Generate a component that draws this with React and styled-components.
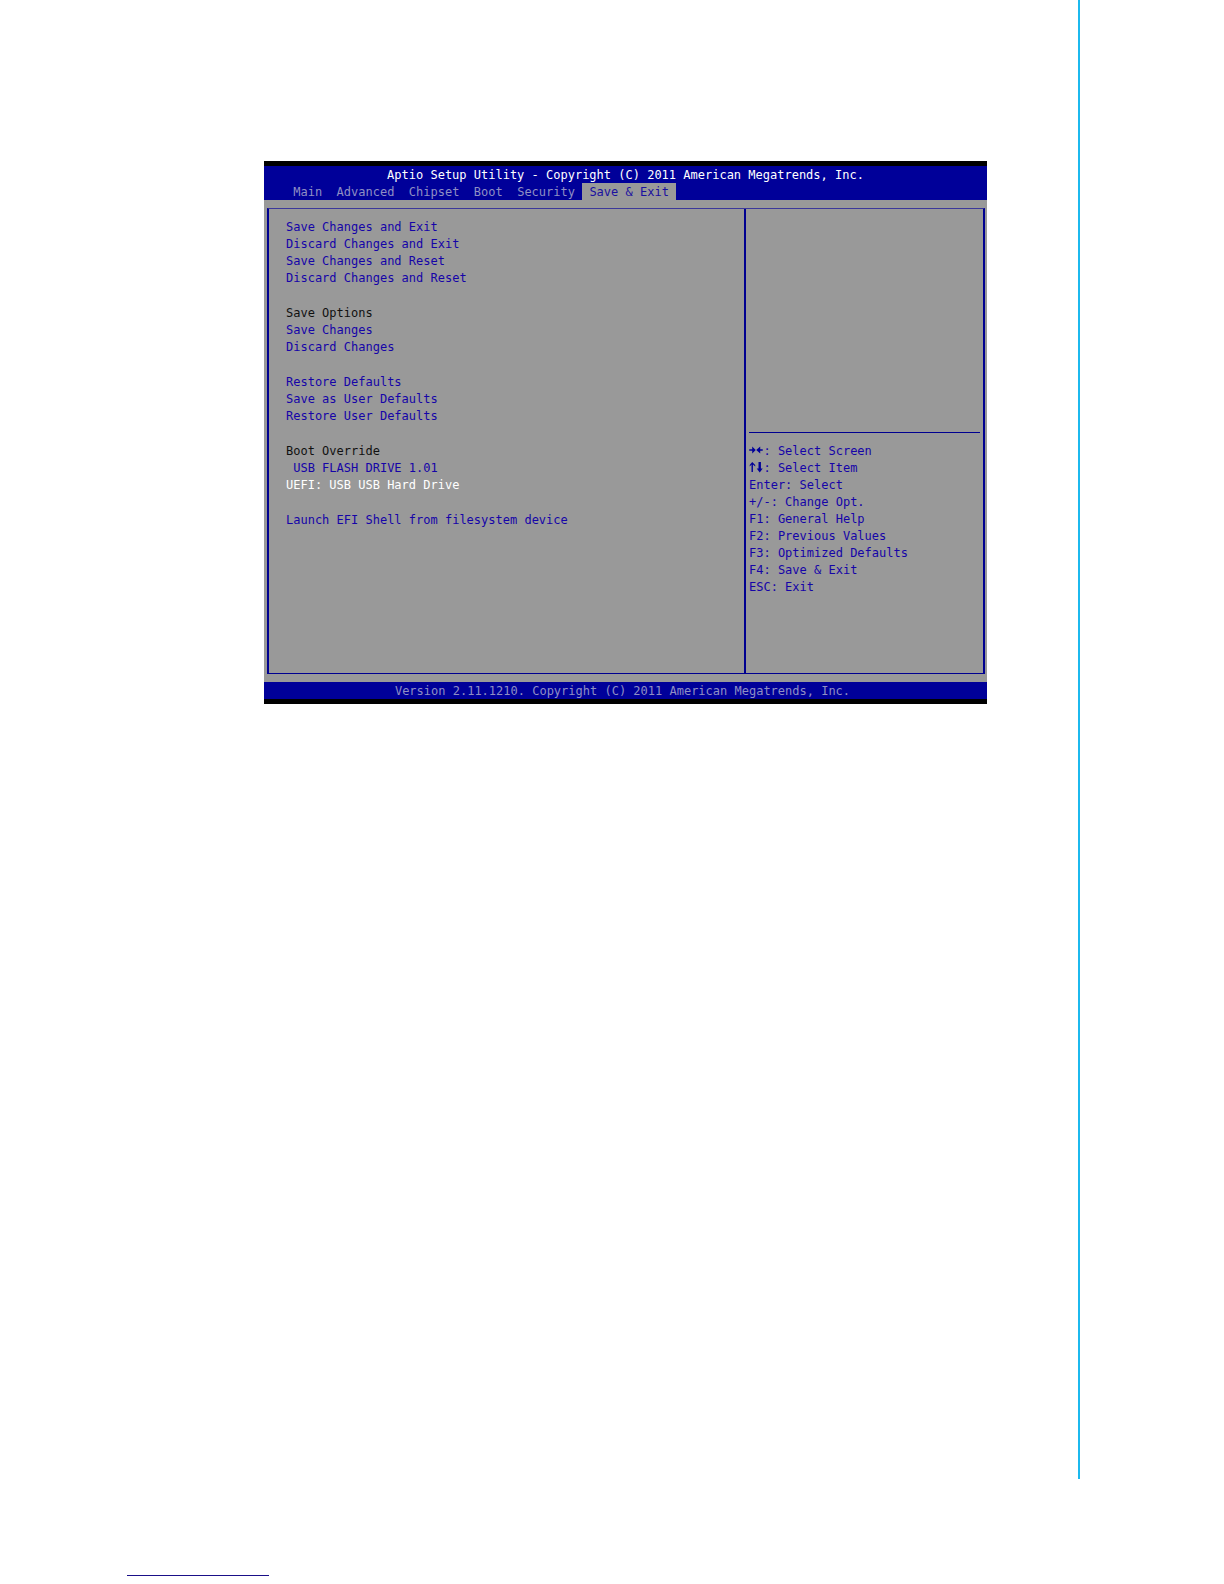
import React, { useState } from "react";
import styled, { createGlobalStyle, css } from "styled-components";

const mono = '"DejaVu Sans Mono", "Liberation Mono", monospace';

const GlobalStyle = createGlobalStyle`
  *, *::before, *::after { box-sizing: border-box; }
  body { margin: 0; background: #fff; }
`;

const Page = styled.div`
  min-height: 100vh;
  display: flex;
  flex-direction: column;
`;

const Sheet = styled.main`
  flex: 1;
  margin-right: 144px;
  padding: 161px 91px 0 264px;
  border-right: 2px solid #1cb9ee;
`;

const PageFoot = styled.footer`
  height: 105px;
  padding: 96px 0 0 127px;
`;

const FootRule = styled.hr`
  width: 142px;
  margin: 0;
  border: 0;
  border-top: 1px solid #1a0f88;
`;

const Screen = styled.section`
  display: flex;
  flex-direction: column;
  border: solid #000;
  border-width: 5px 0;
  background: #999;
  color: #1504a8;
  font-family: ${mono};
  font-size: 12px;
  line-height: 17px;
`;

const barText = css`
  font: inherit;
  line-height: 15px;
  padding-top: 2px;
`;

const Header = styled.header`
  background: #000099;
`;

const Title = styled.h1`
  margin: 0;
  ${barText}
  color: #fff;
  text-align: center;
`;

const Tabs = styled.nav`
  display: flex;
  padding-left: 22px;
`;

const Tab = styled.button`
  margin: 0;
  padding: 0 1ch;
  border: 0;
  ${barText}
  cursor: pointer;
  background: ${(p) => (p.$active ? "#999" : "transparent")};
  color: ${(p) => (p.$active ? "#1a10a0" : "#8f8fc4")};
`;

const Frame = styled.div`
  display: grid;
  grid-template-columns: 1fr 239px;
  margin: 8px 2px 8px 3px;
  border: solid #000090;
  border-width: 1px 2px;
  border-top-color: #3c389a;
  min-height: 466px;
`;

const Options = styled.div`
  display: flex;
  flex-direction: column;
  gap: 18px;
  padding: 10px 17px;
`;

const Group = styled.div`
  display: flex;
  flex-direction: column;
  align-items: flex-start;
`;

const GroupTitle = styled.h2`
  margin: 0;
  font: inherit;
  color: #111;
`;

const Option = styled.button`
  margin: 0;
  padding: 0 0 0 ${(p) => (p.$indent ? "1ch" : "0")};
  border: 0;
  background: none;
  font: inherit;
  text-align: left;
  cursor: pointer;
  color: ${(p) => (p.$selected ? "#fff" : "inherit")};
`;

const Side = styled.aside`
  display: flex;
  flex-direction: column;
  border-left: 2px solid #000090;
  padding: 0 3px;
`;

const Description = styled.div`
  height: 224px;
  border-bottom: 1px solid #000090;
`;

const Keys = styled.ul`
  list-style: none;
  margin: 0;
  padding: 10px 0 0;
`;

const Key = styled.li`
  display: flex;
  align-items: center;
  white-space: pre;
`;

const Arrows = styled.svg`
  width: 2ch;
  height: 14px;
  fill: #000099;
`;

const Version = styled.footer`
  ${barText}
  padding-right: 6px;
  background: #000099;
  color: #8f8fc4;
  text-align: center;
`;

const tabs = ["Main", "Advanced", "Chipset", "Boot", "Security", "Save & Exit"];

const groups = [
  {
    items: [
      "Save Changes and Exit",
      "Discard Changes and Exit",
      "Save Changes and Reset",
      "Discard Changes and Reset",
    ],
  },
  { title: "Save Options", items: ["Save Changes", "Discard Changes"] },
  { items: ["Restore Defaults", "Save as User Defaults", "Restore User Defaults"] },
  { title: "Boot Override", items: ["USB FLASH DRIVE 1.01", "UEFI: USB USB Hard Drive"] },
  { items: ["Launch EFI Shell from filesystem device"] },
];

const keys = [
  "Enter: Select",
  "+/-: Change Opt.",
  "F1: General Help",
  "F2: Previous Values",
  "F3: Optimized Defaults",
  "F4: Save & Exit",
  "ESC: Exit",
];

export default function App() {
  const [tab, setTab] = useState("Save & Exit");
  const [selected, setSelected] = useState("UEFI: USB USB Hard Drive");

  return (
    <Page>
      <GlobalStyle />
      <Sheet>
        <Screen>
          <Header>
            <Title>Aptio Setup Utility - Copyright (C) 2011 American Megatrends, Inc.</Title>
            <Tabs>
              {tabs.map((t) => (
                <Tab key={t} $active={t === tab} onClick={() => setTab(t)}>
                  {t}
                </Tab>
              ))}
            </Tabs>
          </Header>
          <Frame>
            <Options>
              {groups.map((g) => (
                <Group key={g.items[0]}>
                  {g.title && <GroupTitle>{g.title}</GroupTitle>}
                  {g.items.map((item) => (
                    <Option
                      key={item}
                      $indent={item.startsWith("USB")}
                      $selected={item === selected}
                      onClick={() => setSelected(item)}
                    >
                      {item}
                    </Option>
                  ))}
                </Group>
              ))}
            </Options>
            <Side>
              <Description />
              <Keys>
                <Key>
                  <Arrows viewBox="0 0 14 14" aria-hidden="true">
                    <path d="M0 4.200h3V1.500L6.500 5 3 8.500V5.800H0zM13.500 4.200H11V1.500L7 5l4 3.500V5.800h2.500z" />
                  </Arrows>
                  : Select Screen
                </Key>
                <Key>
                  <Arrows viewBox="0 0 14 14" aria-hidden="true">
                    <path d="M3 0l3 3v1.500L3.700 2.500V10H2.300V2.500L0.500 4.500V3zM9.300 0h2.400v6.500h1.800L10.500 10.500 7.500 6.500h1.800z" />
                  </Arrows>
                  : Select Item
                </Key>
                {keys.map((k) => (
                  <Key key={k}>{k}</Key>
                ))}
              </Keys>
            </Side>
          </Frame>
          <Version>Version 2.11.1210. Copyright (C) 2011 American Megatrends, Inc.</Version>
        </Screen>
      </Sheet>
      <PageFoot>
        <FootRule />
      </PageFoot>
    </Page>
  );
}
